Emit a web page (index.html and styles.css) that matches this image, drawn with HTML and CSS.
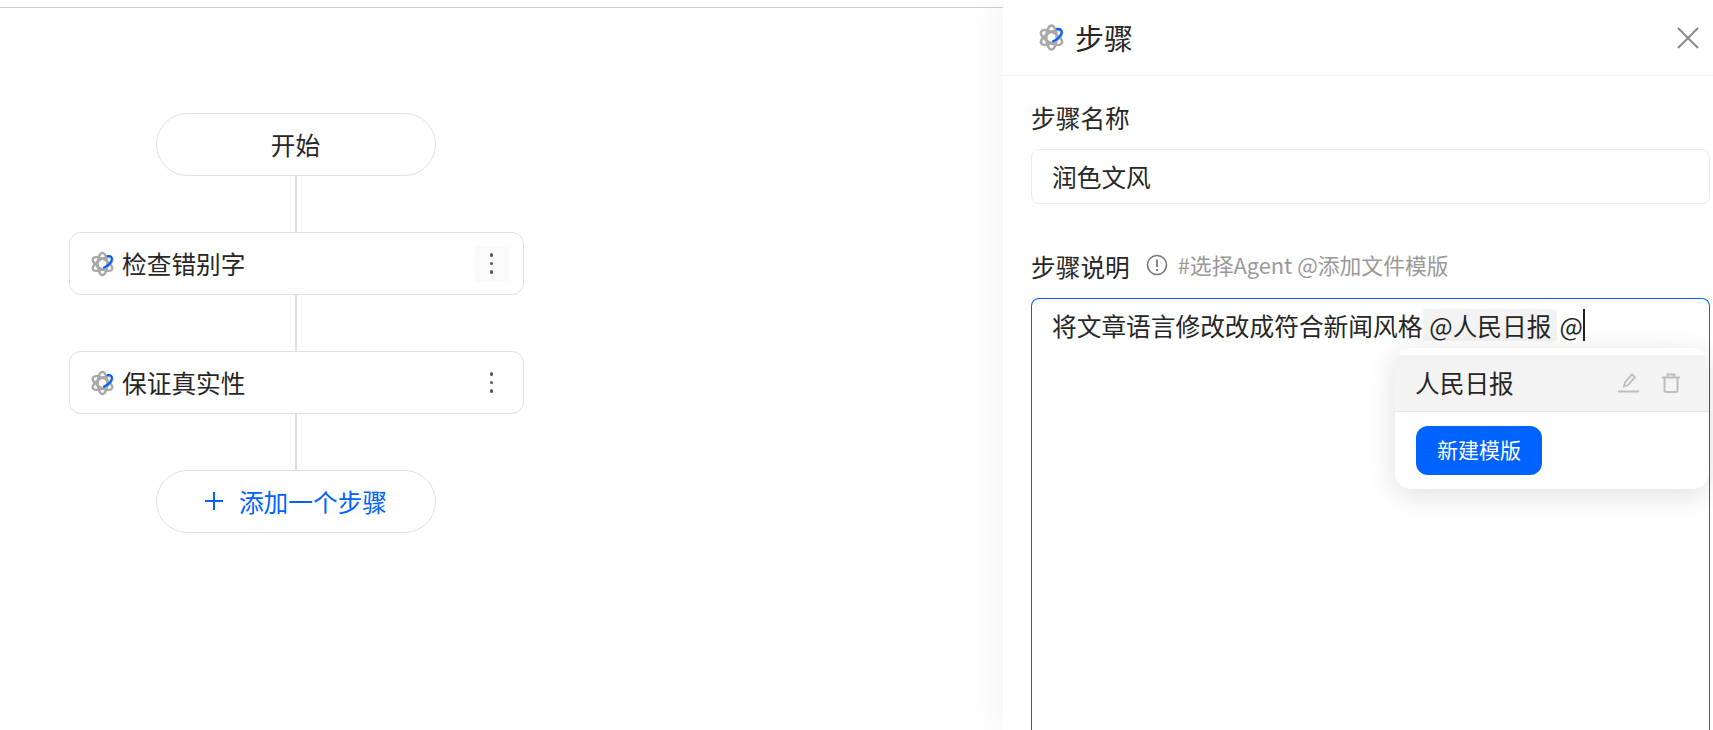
FILE: index.html
```html
<!DOCTYPE html>
<html lang="zh-CN">
<head>
    <meta charset="UTF-8">
    <meta name="viewport" content="width=device-width, initial-scale=1.0">
    <title>步骤</title>
    <link rel="stylesheet" href="styles.css">
</head>
<body>
    <svg class="defs" width="0" height="0">
        <symbol id="atom" viewBox="0 0 24 24">
            <g fill="none" stroke="#a8a8a8" stroke-width="2.200">
                <ellipse cx="12" cy="12" rx="4.6" ry="10.6"/>
                <ellipse cx="12" cy="12" rx="4.6" ry="10.6" transform="rotate(60 12 12)"/>
                <ellipse cx="12" cy="12" rx="4.6" ry="10.6" transform="rotate(120 12 12)"/>
            </g>
            <path d="M17 4.400c3-.4 4.600 1.200 3.900 3.600-.8 2.800-3.900 5.800-7.400 7.400" fill="none" stroke="#0062ff" stroke-width="2" stroke-linecap="round"/>
        </symbol>
    </svg>

    <main class="canvas">
        <div class="flow">
            <div class="pill">开始</div>
            <div class="link"></div>
            <div class="step">
                <svg class="atom"><use href="#atom"/></svg>
                <span class="step-name">检查错别字</span>
                <span class="more more-hover"><i></i><i></i><i></i></span>
            </div>
            <div class="link"></div>
            <div class="step">
                <svg class="atom"><use href="#atom"/></svg>
                <span class="step-name">保证真实性</span>
                <span class="more"><i></i><i></i><i></i></span>
            </div>
            <div class="link"></div>
            <div class="pill pill-add">
                <svg class="plus" viewBox="0 0 20 20"><path d="M10 1v18M1 10h18" stroke="#0062ff" stroke-width="2" fill="none"/></svg>
                添加一个步骤
            </div>
        </div>
    </main>

    <aside class="panel">
        <header class="panel-head">
            <svg class="atom atom-big"><use href="#atom"/></svg>
            <span class="panel-title">步骤</span>
            <svg class="close" viewBox="0 0 22 22"><path d="M1 1l20 20M21 1L1 21" stroke="#8a8a8a" stroke-width="2" fill="none"/></svg>
        </header>
        <div class="panel-body">
            <div class="field-label">步骤名称</div>
            <input class="name-input" type="text" value="润色文风">

            <div class="field-label field-label-second">
                步骤说明
                <svg class="info" viewBox="0 0 22 22">
                    <circle cx="11" cy="11" r="9.500" fill="none" stroke="#777" stroke-width="1.600"/>
                    <path d="M11 5.500v7.500M11 15v2" stroke="#777" stroke-width="1.800" fill="none"/>
                </svg>
                <span class="hint">#选择Agent @添加文件模版</span>
            </div>

            <div class="editor">
                <div class="editor-line">将文章语言修改改成符合新闻风格<span class="tag">@人民日报</span><span class="at">@</span><span class="caret"></span></div>
                <div class="popup">
                    <div class="popup-row">
                        <span class="popup-name">人民日报</span>
                        <svg class="popup-icon" viewBox="0 0 21 20"><path d="M6 13.500l1-4 7-8 3 2.500-7 8zM0 18.500h21" fill="none" stroke="#bdbdbd" stroke-width="1.800"/></svg>
                        <svg class="popup-icon trash" viewBox="0 0 20 20"><path d="M1 4.500h18M6.500 4.500V1.500h7v3M3.500 4.500v13a1.500 1.500 0 0 0 1.500 1.500h10a1.500 1.500 0 0 0 1.500-1.500v-13" fill="none" stroke="#bdbdbd" stroke-width="2"/></svg>
                    </div>
                    <button class="new-btn">新建模版</button>
                </div>
            </div>
        </div>
    </aside>
</body>
</html>
```

FILE: styles.css
```css
* {
    box-sizing: border-box;
}
body {
    margin: 0;
    display: flex;
    height: 730px;
    overflow: hidden;
    background: #fff;
    font-family: "Noto Sans CJK SC", "Liberation Sans", sans-serif;
    font-size: 24.7px;
    color: #262626;
}
.defs {
    position: absolute;
}

/* left canvas */
.canvas {
    width: 1003px;
    flex: none;
    margin-top: 7px;
    border-top: 1px solid #cfcfcf;
    padding: 105px 0 0 69px;
}
.flow {
    width: 455px;
    display: flex;
    flex-direction: column;
    align-items: center;
}
.pill {
    width: 280px;
    height: 63px;
    margin-right: 2px;
    padding-bottom: 2px;
    border: 1px solid #e0e0e0;
    border-radius: 32px;
    display: flex;
    align-items: center;
    justify-content: center;
}
.pill-add {
    color: #0062ff;
    gap: 15px;
}
.plus {
    width: 20px;
    height: 20px;
}
.link {
    width: 2px;
    height: 56px;
    margin-right: 2px;
    background: #e0e0e0;
}
.step {
    width: 100%;
    height: 63px;
    border: 1px solid #e0e0e0;
    border-radius: 12px;
    display: flex;
    align-items: center;
    padding: 0 14px 0 20px;
}
.atom {
    width: 25px;
    height: 26px;
    flex: none;
}
.step-name {
    margin-left: 7px;
    padding-bottom: 2px;
    flex: 1;
}
.more {
    width: 35px;
    height: 36px;
    border-radius: 6px;
    display: flex;
    flex-direction: column;
    align-items: center;
    justify-content: center;
    gap: 5px;
}
.more i {
    width: 3.500px;
    height: 3.500px;
    border-radius: 50%;
    background: #595959;
}
.more-hover {
    background: #fafafa;
}

/* right panel */
.panel {
    width: 710px;
    flex: none;
    background: #fff;
    box-shadow: -14px 0 24px rgba(0, 0, 0, 0.035);
}
.panel-head {
    height: 76px;
    border-bottom: 1px solid #f0f0f0;
    display: flex;
    align-items: center;
    padding: 0 3px 0 35px;
}
.atom-big {
    width: 27px;
    height: 29px;
}
.panel-title {
    margin-left: 10px;
    padding-bottom: 2px;
    font-size: 29px;
    flex: 1;
}
.close {
    width: 22px;
    height: 22px;
    margin-right: 11px;
}
.panel-body {
    padding: 23px 3px 0 28px;
}
.field-label {
    height: 36px;
    line-height: 36px;
    display: flex;
    align-items: center;
}
.field-label-second {
    margin-top: 44px;
}
.name-input {
    display: block;
    width: 100%;
    height: 55px;
    margin-top: 14px;
    padding: 0 20px 2px;
    border: 1px solid #ebebeb;
    border-radius: 8px;
    font: inherit;
    color: #262626;
    outline: none;
}
.info {
    width: 22px;
    height: 22px;
    margin: 0 0 2px 16px;
}
.hint {
    margin-left: 10px;
    line-height: 30px;
    padding-bottom: 3px;
    font-size: 21.8px;
    color: #999;
}
.editor {
    position: relative;
    height: 432px;
    margin-top: 14px;
    padding: 10px 20px;
    border: 1px solid #0062ff;
    border-bottom: none;
    border-radius: 8px 8px 0 0;
}
.editor-line {
    display: flex;
    align-items: center;
    height: 32px;
    white-space: nowrap;
}
.tag {
    height: 32px;
    line-height: 32px;
    padding: 0 6px;
    margin-left: 1px;
    border-radius: 3px;
    background: #f3f3f3;
}
.at {
    margin-left: 2px;
}
.caret {
    width: 2px;
    height: 32px;
    background: #222;
}

/* template menu */
.popup {
    position: absolute;
    top: 49px;
    right: 0;
    width: 314px;
    padding-top: 7px;
    background: #fff;
    border-radius: 16px;
    box-shadow: 0 6px 30px rgba(0, 0, 0, 0.13);
    overflow: hidden;
}
.popup-row {
    height: 57px;
    background: #f4f4f4;
    border-bottom: 1px solid #e8e8e8;
    display: flex;
    align-items: center;
    padding: 0 28px 0 20px;
}
.popup-name {
    flex: 1;
    padding-bottom: 2px;
}
.popup-icon {
    width: 21px;
    height: 20px;
}
.trash {
    width: 20px;
    margin-left: 22px;
}
.new-btn {
    display: block;
    width: 126px;
    height: 49px;
    margin: 14px 0 14px 21px;
    padding: 0 0 3px;
    border: none;
    border-radius: 12px;
    background: #0062ff;
    color: #fff;
    font: inherit;
    font-size: 21px;
}
```
